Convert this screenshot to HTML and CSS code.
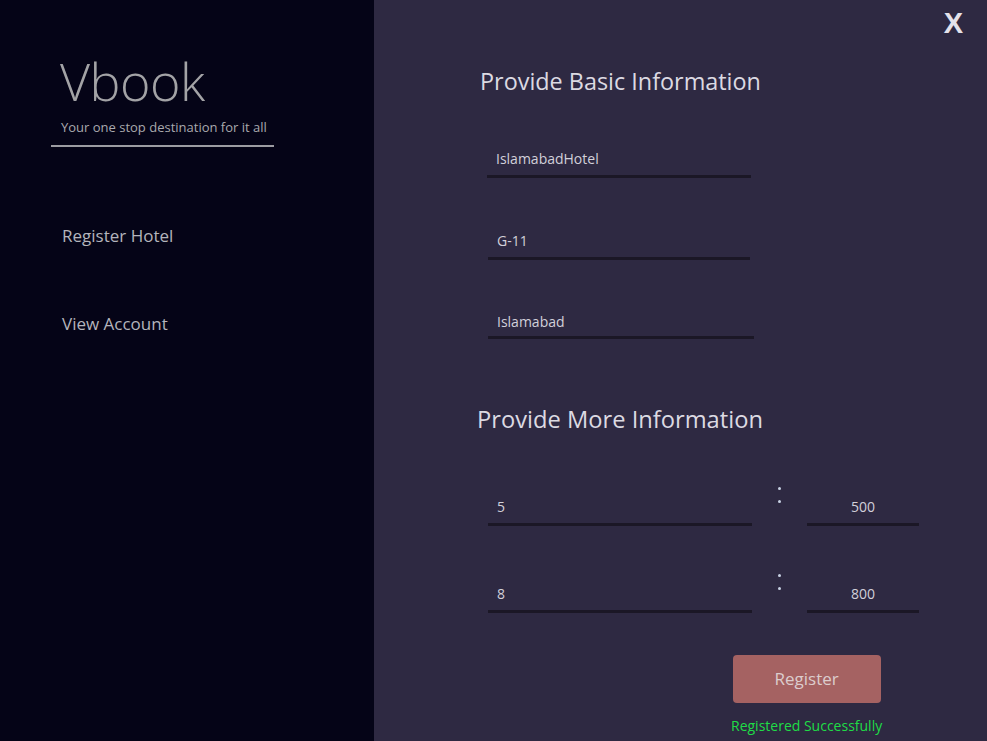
FILE: index.html
```html
<!DOCTYPE html>
<html>
<head>
<meta charset="utf-8">
<link rel="stylesheet" href="styles.css">
</head>
<body>
<div class="app">
  <aside class="sidebar">
    <div class="brand">
      <div class="logo">Vbook</div>
      <div class="tagline">Your one stop destination for it all</div>
    </div>
    <nav class="nav">
      <div class="nav-item">Register Hotel</div>
      <div class="nav-item">View Account</div>
    </nav>
  </aside>
  <main class="main">
    <div class="close">X</div>
    <div class="form">
      <h2 class="heading">Provide Basic Information</h2>
      <div class="field f1">IslamabadHotel</div>
      <div class="field f2">G-11</div>
      <div class="field f3">Islamabad</div>
      <h2 class="heading h2">Provide More Information</h2>
      <div class="row r1">
        <div class="field wide">5</div>
        <div class="colon"><span></span><span></span></div>
        <div class="field small">500</div>
      </div>
      <div class="row r2">
        <div class="field wide">8</div>
        <div class="colon"><span></span><span></span></div>
        <div class="field small">800</div>
      </div>
      <div class="actions">
        <div class="btn">Register</div>
        <div class="status">Registered Successfully</div>
      </div>
    </div>
  </main>
</div>
</body>
</html>
```
FILE: styles.css
```css
* { box-sizing: border-box; }
html, body { margin: 0; padding: 0; }
body {
  width: 987px;
  height: 741px;
  overflow: hidden;
  font-family: "Open Sans", "Noto Sans", sans-serif;
}
.app {
  display: flex;
  width: 987px;
  height: 741px;
}
.sidebar {
  width: 374px;
  background: #050417;
  display: flex;
  flex-direction: column;
}
.brand {
  margin-left: 51px;
  margin-top: 46px;
  width: 223px;
  border-bottom: 2px solid #9c9ca2;
  padding-bottom: 9px;
}
.logo {
  font-size: 52px;
  font-weight: 300;
  color: #a3a3a6;
  line-height: 70px;
  margin-left: 9px;
  letter-spacing: -0.5px;
}
.tagline {
  font-size: 13px;
  color: #a9a9ae;
  line-height: 18px;
  margin-left: 10px;
  margin-top: 2px;
}
.nav {
  display: flex;
  flex-direction: column;
  gap: 64px;
  margin-left: 62px;
  margin-top: 77px;
}
.nav-item {
  font-size: 17px;
  color: #b4b4bc;
  line-height: 24px;
}
.main {
  flex: 1;
  background: #2e2942;
  position: relative;
}
.close {
  position: absolute;
  right: 24px;
  top: 7px;
  font-family: "Liberation Sans", Arial, sans-serif;
  font-weight: bold;
  font-size: 29px;
  color: #e4e2ea;
  line-height: 32px;
}
.form {
  margin-left: 106px;
  padding-top: 65px;
  display: flex;
  flex-direction: column;
  align-items: flex-start;
}
.heading {
  margin: 0;
  font-size: 23.4px;
  font-weight: 400;
  color: #dcdae2;
  line-height: 32px;
}
.heading.h2 { margin-left: -3px; margin-top: 64px; font-size: 23.7px; }
.field {
  font-size: 14px;
  color: #d2d0da;
  line-height: 20px;
  padding: 0 9px 6px;
  border-bottom: 3px solid #1b1726;
}
.f1 { width: 264px; margin-left: 7px; margin-top: 52px; }
.f2 { width: 262px; margin-left: 8px; margin-top: 53px; }
.f3 { width: 266px; margin-left: 8px; margin-top: 52px; padding-bottom: 4px; }
.row {
  display: flex;
  align-items: flex-end;
  margin-left: 8px;
}
.r1 { margin-top: 62px; }
.r2 { margin-top: 58px; }
.wide { width: 264px; }
.small { width: 112px; text-align: center; }
.colon {
  width: 55px;
  align-self: flex-start;
  display: flex;
  flex-direction: column;
  align-items: center;
  gap: 10px;
  margin-top: -10px;
}
.colon span {
  width: 3px;
  height: 3px;
  border-radius: 50%;
  background: #c8d2e4;
}
.actions {
  margin-left: 251px;
  margin-top: 42px;
  display: flex;
  flex-direction: column;
  align-items: center;
}
.btn {
  width: 148px;
  height: 48px;
  background: #a56262;
  border-radius: 4px;
  color: #dccdcd;
  font-size: 17px;
  line-height: 48px;
  text-align: center;
}
.status {
  margin-top: 13px;
  font-size: 14px;
  color: #1fdc46;
  line-height: 20px;
}
```
